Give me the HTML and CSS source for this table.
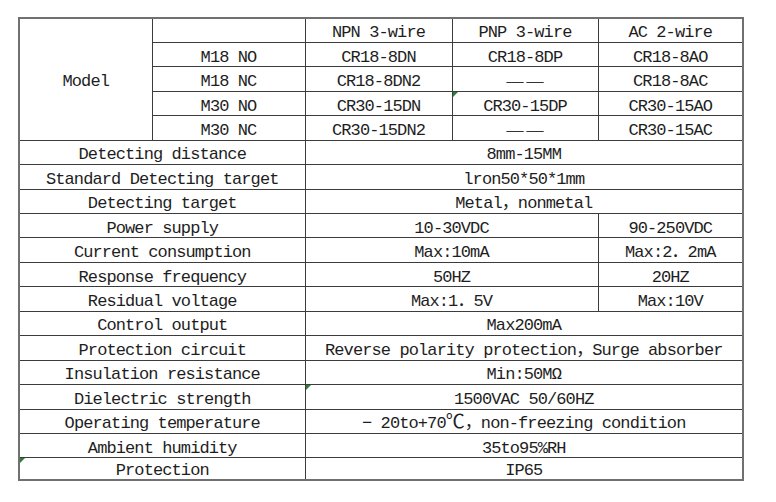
FILE: index.html
```html
<!DOCTYPE html>
<html>
<head>
<meta charset="utf-8">
<link rel="stylesheet" href="styles.css">
</head>
<body>
<table class="spec">
  <colgroup>
    <col class="c1"><col class="c2"><col class="c3"><col class="c4"><col class="c5">
  </colgroup>
  <tr><td rowspan="5">Model</td><td></td><td>NPN 3-wire</td><td>PNP 3-wire</td><td>AC 2-wire</td></tr>
  <tr><td>M18 NO</td><td>CR18-8DN</td><td>CR18-8DP</td><td>CR18-8AO</td></tr>
  <tr><td>M18 NC</td><td>CR18-8DN2</td><td><span class="dashes">——</span></td><td>CR18-8AC</td></tr>
  <tr><td>M30 NO</td><td>CR30-15DN</td><td class="flag">CR30-15DP</td><td>CR30-15AO</td></tr>
  <tr><td>M30 NC</td><td>CR30-15DN2</td><td><span class="dashes">——</span></td><td>CR30-15AC</td></tr>
  <tr><td colspan="2">Detecting distance</td><td colspan="3">8mm-15MM</td></tr>
  <tr><td colspan="2">Standard Detecting target</td><td colspan="3">lron50*50*1mm</td></tr>
  <tr><td colspan="2">Detecting target</td><td colspan="3">Metal，nonmetal</td></tr>
  <tr><td colspan="2">Power supply</td><td colspan="2">10-30VDC</td><td>90-250VDC</td></tr>
  <tr><td colspan="2">Current consumption</td><td colspan="2">Max:10mA</td><td>Max:2．2mA</td></tr>
  <tr><td colspan="2">Response frequency</td><td colspan="2">50HZ</td><td>20HZ</td></tr>
  <tr><td colspan="2">Residual voltage</td><td colspan="2">Max:1．5V</td><td>Max:10V</td></tr>
  <tr><td colspan="2">Control output</td><td colspan="3">Max200mA</td></tr>
  <tr><td colspan="2">Protection circuit</td><td colspan="3">Reverse polarity protection，Surge absorber</td></tr>
  <tr><td colspan="2">Insulation resistance</td><td colspan="3">Min:50MΩ</td></tr>
  <tr><td colspan="2">Dielectric strength</td><td colspan="3" class="flag">1500VAC 50/60HZ</td></tr>
  <tr><td colspan="2">Operating temperature</td><td colspan="3">− 20to+70<span class="deg">℃</span>，non-freezing condition</td></tr>
  <tr><td colspan="2">Ambient humidity</td><td colspan="3">35to95%RH</td></tr>
  <tr class="last"><td colspan="2" class="flag">Protection</td><td colspan="3">IP65</td></tr>
</table>
</body>
</html>
```
FILE: styles.css
```css
html, body {
  margin: 0;
  padding: 0;
  background: #ffffff;
}
body {
  padding: 17px 0 0 18px;
}
.spec {
  border-collapse: collapse;
  table-layout: fixed;
  width: 724px;
  border: 2px solid #707070;
  font-family: "Liberation Mono", "DejaVu Sans Mono", "Noto Sans CJK SC", monospace;
  font-size: 17px;
  letter-spacing: -0.9px;
  color: #1e1e1e;
}
.c1 { width: 133px; }
.c2 { width: 153px; }
.c3 { width: 147px; }
.c4 { width: 146px; }
.c5 { width: 145px; }
.spec tr {
  height: 24.45px;
}
.spec tr.last {
  height: 22px;
}
.spec td {
  border: 1px solid #3c3c3c;
  text-align: center;
  vertical-align: middle;
  padding: 6px 0 0 0;
  line-height: 16px;
  white-space: nowrap;
}
.spec tr.last td {
  padding-top: 4px;
}
.dashes {
  font-family: "Liberation Serif", serif;
  font-size: 17px;
  letter-spacing: 3px;
  padding-left: 3px;
  line-height: 0;
  color: #333333;
}
.deg {
  font-family: "Noto Sans CJK SC", sans-serif;
  font-size: 19px;
  line-height: 0;
  letter-spacing: 0;
}
.flag {
  position: relative;
}
.flag::before {
  content: "";
  position: absolute;
  left: 0;
  top: 0;
  border-top: 5px solid #2f7d3b;
  border-right: 5px solid transparent;
}
```
